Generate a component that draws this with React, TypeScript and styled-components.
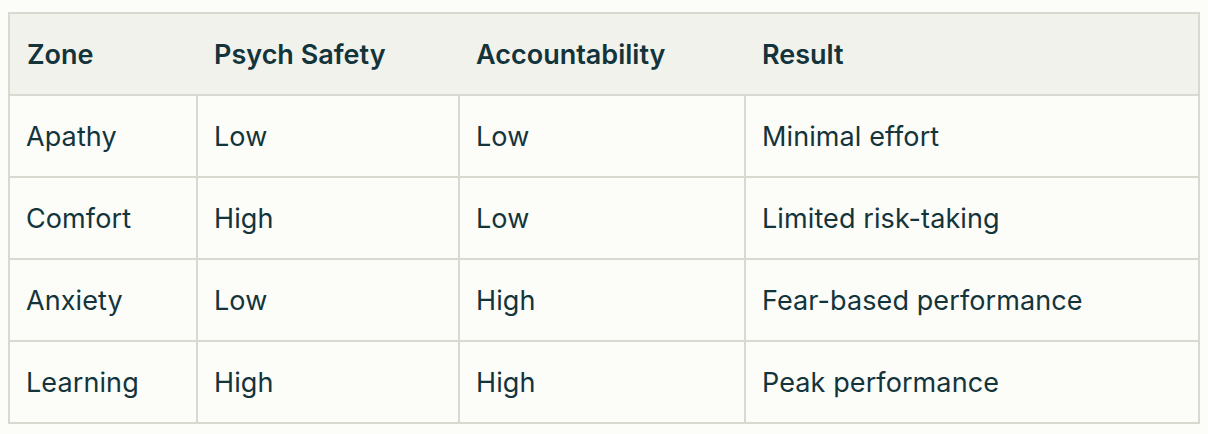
import React from "react";
import styled, { createGlobalStyle } from "styled-components";

const Global = createGlobalStyle`
  html, body { margin: 0; padding: 0; background: #fcfcf9; }
  body { font-family: Inter, "Liberation Sans", sans-serif; color: #13343b; }
`;

const Wrap = styled.div`
  padding: 12px 10px 0 8px;
`;

const Table = styled.table`
  width: 1190px;
  border-collapse: collapse;
  table-layout: fixed;
  border: 2px solid #d9d9d1;
`;

const HeadRow = styled.tr`
  background: #f2f2ed;
`;

const Th = styled.th`
  text-align: left;
  font-weight: 600;
  font-size: 27px;
  height: 80px;
  padding: 0 0 0 17px;
  border-bottom: 2px solid #d9d9d1;
  color: #13343b;
`;

const Td = styled.td`
  font-size: 27px;
  font-weight: 400;
  letter-spacing: 0.1px;
  height: 80px;
  padding: 0 0 0 16px;
  border: 2px solid #d9d9d1;
  color: #13343b;
`;

const cols = [188, 262, 286, 454];
const header = ["Zone", "Psych Safety", "Accountability", "Result"];
const rows = [
  ["Apathy", "Low", "Low", "Minimal effort"],
  ["Comfort", "High", "Low", "Limited risk-taking"],
  ["Anxiety", "Low", "High", "Fear-based performance"],
  ["Learning", "High", "High", "Peak performance"],
];

export default function App() {
  return (
    <>
      <Global />
      <Wrap>
        <Table>
          <colgroup>
            {cols.map((w, i) => (
              <col key={i} style={{ width: w }} />
            ))}
          </colgroup>
          <thead>
            <HeadRow>
              {header.map((h) => (
                <Th key={h}>{h}</Th>
              ))}
            </HeadRow>
          </thead>
          <tbody>
            {rows.map((r, i) => (
              <tr key={i}>
                {r.map((c, j) => (
                  <Td key={j}>{c}</Td>
                ))}
              </tr>
            ))}
          </tbody>
        </Table>
      </Wrap>
    </>
  );
}
